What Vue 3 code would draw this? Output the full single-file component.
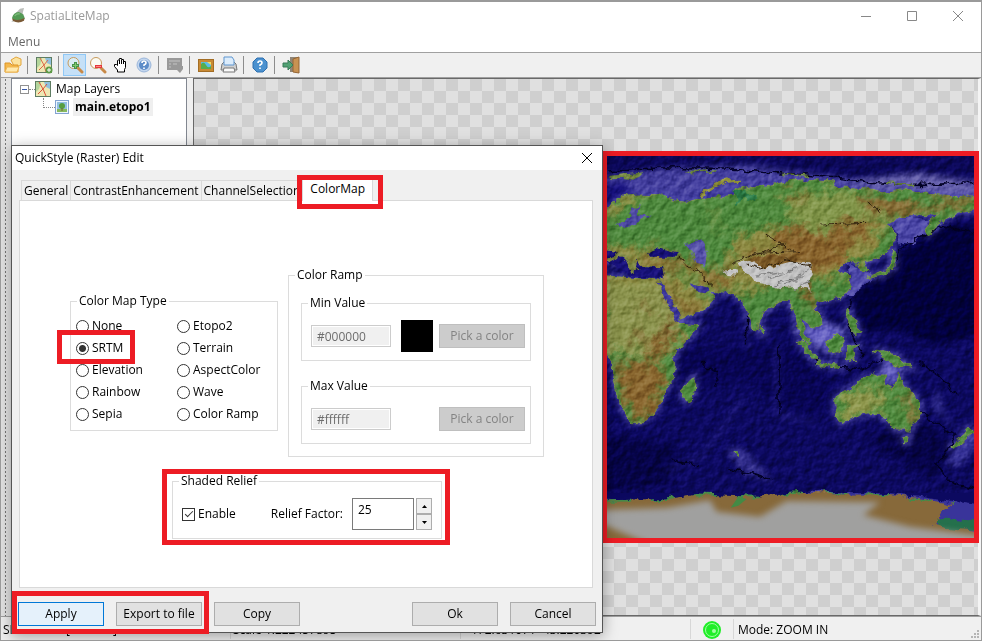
<template>
    <div class="app-window">
        <header class="title-bar">
            <svg class="app-logo" viewBox="0 0 48 48">
                <path d="M4 42 L16 28 L18 14 L30 2 L42 0 L38 16 L44 30 L12 40 Z" fill="#b9bcb8" />
                <path d="M6 30 Q10 14 26 12 Q42 16 44 32 Q30 44 12 38 Z" fill="#549a55" />
                <path d="M6 31 Q20 42 44 30 L42 38 Q26 48 9 39 Z" fill="#7a5a36" />
                <path d="M14 24 Q20 15 29 18" stroke="#7cba79" stroke-width="4" fill="none" />
            </svg>
            <h1>SpatiaLiteMap</h1>
            <div class="window-controls">
                <button aria-label="Minimize"><svg viewBox="0 0 12 12"><path d="M1 6.5H11" /></svg></button>
                <button aria-label="Maximize"><svg viewBox="0 0 12 12"><path d="M1.5 1.5H10.5V10.5H1.5Z" /></svg></button>
                <button aria-label="Close"><svg viewBox="0 0 12 12"><path d="M1 1L11 11M11 1L1 11" /></svg></button>
            </div>
        </header>
        <nav class="menu-bar"><a href="#">Menu</a></nav>

        <div class="toolbar">
            <button aria-label="Open">
                <svg viewBox="0 0 18 18">
                    <path d="M7 4L12 1L17 3V9L11 12Z" fill="#fbe3a0" stroke="#e3a63c" />
                    <path d="M1 7H6L8 9H14V16H1Z" fill="#f5b84c" stroke="#dd9526" />
                    <path d="M3 11H15L13 16H1Z" fill="#ffe9ae" stroke="#eeb650" />
                </svg>
            </button>
            <span class="separator"></span>
            <button aria-label="Add layer">
                <svg viewBox="0 0 18 18">
                    <rect x="1.5" y="1.5" width="15" height="15" fill="#eee8b4" stroke="#5f7d63" />
                    <path d="M2 2H7L5 9L2 12Z" fill="#b5d69c" /><path d="M10 2H16V9L12 7Z" fill="#8fc0dd" />
                    <path d="M5 2L9 9L11 16M9 9L4 14M9 9L13 4" stroke="#dc6848" fill="none" />
                    <circle cx="14" cy="14" r="3.5" fill="#5d9b45" /><path d="M12 14H16M14 12V16" stroke="#fff" />
                </svg>
            </button>
            <span class="separator"></span>
            <button class="active" aria-label="Zoom in">
                <svg viewBox="0 0 18 18">
                    <path d="M12 12L16 16" stroke="#c88a48" stroke-width="3" stroke-linecap="round" />
                    <circle cx="7.5" cy="7" r="5.5" fill="#d9edf5" stroke="#c79a5c" />
                    <path d="M6 9.5H13M9.5 6V13" stroke="#48934c" stroke-width="3" /><path d="M7 9.5H12M9.5 7V12" stroke="#80ca70" />
                </svg>
            </button>
            <button aria-label="Zoom out">
                <svg viewBox="0 0 18 18">
                    <path d="M12 12L16 16" stroke="#c88a48" stroke-width="3" stroke-linecap="round" />
                    <circle cx="7" cy="7" r="5.5" fill="#fbfbf2" stroke="#c79a5c" />
                    <path d="M6 10.5H13" stroke="#e4383c" stroke-width="3" /><path d="M7 10.5H12" stroke="#ff8b86" />
                </svg>
            </button>
            <button aria-label="Pan">
                <svg viewBox="0 0 18 18">
                    <path d="M5.5 16V14L2.500 10.500V8.500H4.500L5.500 9.500V4.500L7.500 3.500V2.500H9.500V3.500H11.500V5.500H13.500V11.500L12.500 13.500V16Z" fill="#fff" stroke="#000" />
                    <path d="M7.500 4V8M9.500 4V8M11.500 5V8" stroke="#000" />
                </svg>
            </button>
            <button aria-label="Identify">
                <svg viewBox="0 0 18 18">
                    <circle cx="9" cy="9" r="7" fill="#c3d6ee" stroke="#9ab6da" />
                    <circle cx="9" cy="9" r="5" fill="#5d8cc8" />
                    <path d="M7 7Q7 5 9 5Q11 5 11 7Q11 8 9 9V10M9 11.500V13" stroke="#fff" stroke-width="1.6" fill="none" />
                </svg>
            </button>
            <span class="separator"></span>
            <button aria-label="Attributes" disabled>
                <svg viewBox="0 0 18 18">
                    <path d="M1 2H16V10H17V13L14 17L11 14H1Z" fill="#999" />
                    <path d="M3 5H14M3 8H5M3 11H5M7 8H11" stroke="#c4c4c4" />
                </svg>
            </button>
            <span class="separator"></span>
            <button aria-label="Map image">
                <svg viewBox="0 0 18 18">
                    <rect x="1.5" y="3.5" width="15" height="12" fill="#c88a35" stroke="#a36d24" />
                    <rect x="4" y="6" width="10" height="7" fill="#58bee5" />
                    <path d="M4 8Q7 5 9 9T14 10V13H4Z" fill="#55ad4c" /><path d="M10 6H14V9Z" fill="#f0dc65" />
                </svg>
            </button>
            <button aria-label="Print">
                <svg viewBox="0 0 18 18">
                    <path d="M2 8L4 6H14L16 8L17 14H1Z" fill="#d0d0d0" stroke="#777" />
                    <path d="M5 1H12L14 4V9H4V1Z" fill="#dcecfb" stroke="#5f96d0" />
                    <path d="M4 12H14L15 16H3Z" fill="#fafafa" stroke="#777" />
                </svg>
            </button>
            <span class="separator"></span>
            <button aria-label="Help">
                <svg viewBox="0 0 18 18">
                    <path d="M6 2H12L16 6V12L12 16H6L2 12V6Z" fill="#4b91cf" stroke="#2e70b0" />
                    <path d="M7 7Q7 5 9 5Q11 5 11 7Q11 8 9 9V10M9 11.500V13" stroke="#fff" stroke-width="1.6" fill="none" />
                </svg>
            </button>
            <span class="separator"></span>
            <button aria-label="Exit">
                <svg viewBox="0 0 18 18">
                    <rect x="8" y="1" width="8" height="15" fill="#8f8577" />
                    <path d="M11 3L17 1V17L11 16Z" fill="#c89252" stroke="#946534" />
                    <path d="M1 7H6V4L11 9L6 14V11H1Z" fill="#52a274" stroke="#397b58" />
                </svg>
            </button>
        </div>

        <main class="workspace">
            <div class="grip"></div>
            <aside class="layer-tree">
                <div class="tree-root">
                    <button class="collapse" aria-label="Collapse">
                        <svg viewBox="0 0 9 9"><rect x=".5" y=".5" width="8" height="8" fill="#fff" stroke="#919191" /><path d="M2 4.5H7" stroke="#3858a8" /></svg>
                    </button>
                    <span class="dots"></span>
                    <svg class="root-icon" viewBox="0 0 16 16">
                        <rect x=".5" y=".5" width="15" height="15" fill="#eee8b4" stroke="#5f7d63" />
                        <path d="M1 1H6L4 8L1 11Z" fill="#b5d69c" /><path d="M9 1H15V8L11 6Z" fill="#8fc0dd" />
                        <path d="M4 1L8 8L11 15M8 8L3 13M8 8L12 3" stroke="#dc5038" fill="none" />
                    </svg>
                    <span>Map Layers</span>
                </div>
                <div class="tree-leaf">
                    <span class="elbow"></span>
                    <svg class="leaf-icon" viewBox="0 0 14 14">
                        <rect x=".5" y=".5" width="13" height="13" fill="#edf5ff" stroke="#84a4d2" />
                        <rect x="2" y="2" width="10" height="10" fill="#91bfe0" /><path d="M2 9H12V12H2Z" fill="#87b95e" />
                        <circle cx="7" cy="6" r="3" fill="#579e40" /><path d="M7 8V11" stroke="#7a6238" />
                    </svg>
                    <strong>main.etopo1</strong>
                </div>
            </aside>

            <section class="map-canvas">
                <svg class="world-map" viewBox="21 33 1101 1146" preserveAspectRatio="none" color-interpolation-filters="sRGB">
                    <defs>
                        <filter id="rough" x="-5%" y="-5%" width="110%" height="110%">
                            <feTurbulence type="fractalNoise" baseFrequency="0.035" numOctaves="4" seed="4" />
                            <feDisplacementMap in="SourceGraphic" scale="26" xChannelSelector="R" yChannelSelector="G" />
                        </filter>
                        <filter id="soft" x="-20%" y="-20%" width="140%" height="140%"><feGaussianBlur stdDeviation="9" /></filter>
                        <filter id="patchy" x="-20%" y="-20%" width="140%" height="140%">
                            <feGaussianBlur stdDeviation="12" result="b" />
                            <feTurbulence type="fractalNoise" baseFrequency="0.03" numOctaves="4" seed="9" result="n" />
                            <feDisplacementMap in="b" in2="n" scale="80" xChannelSelector="R" yChannelSelector="G" />
                        </filter>
                        <filter id="relief" x="0" y="0" width="100%" height="100%">
                            <feTurbulence type="fractalNoise" baseFrequency="0.04" numOctaves="4" seed="7" />
                            <feColorMatrix values="0 0 0 0 0  0 0 0 0 0  0 0 0 0 0  1 0 0 0 0" />
                            <feDiffuseLighting surfaceScale="6" lighting-color="#fff"><feDistantLight azimuth="225" elevation="29" /></feDiffuseLighting>
                        </filter>
                        <clipPath id="land-clip"><path :d="eurasia" /><path :d="africa" /><path :d="australia" /></clipPath>
                    </defs>
                    <rect x="21" y="33" width="1101" height="1146" fill="#0c0960" />
                    <g filter="url(#soft)">
                        <path d="M890 330L1050 235L1150 250V560L1010 600L880 550L790 560L760 460Z" fill="#02013c" />
                        <path d="M230 620L560 600L700 720L650 820L540 780L430 700L220 740Z" fill="#080555" />
                        <path d="M0 870L240 900L210 1020L0 1040ZM930 800L1060 900L1000 1000L800 890Z" fill="#060448" />
                        <path d="M0 95L200 70L440 60L600 82L780 104L950 85L1150 115V200L0 210Z" fill="#4540a0" />
                        <path d="M700 130L780 104L950 85L1150 115V200L720 160Z" fill="#6661ad" />
                        <path d="M0 0H1150V95L950 75L780 93L610 75L430 50L190 62L0 80Z" fill="#0b0858" />
                        <path d="M0 120L70 110L110 145L0 200Z" fill="#15107c" />
                        <path d="M570 545L680 530L740 560L700 630L640 600ZM850 640L910 660L890 725L840 700Z" fill="#706bca" />
                        <path d="M1010 730L1040 830L1150 880L1080 960L1040 960L1090 860L1000 790Z" fill="#38349a" />
                        <path d="M380 910L440 920L520 1010L430 985Z" fill="#312d8c" />
                        <path d="M200 980L310 930L430 760M530 600V810L640 830M430 470L445 620" stroke="#1b1776" stroke-width="12" fill="none" />
                    </g>
                    <g class="shelf" filter="url(#soft)">
                        <path :d="eurasia" /><path :d="africa" /><path :d="australia" />
                        <path v-for="(d, i) in islands" :key="i" :d="d" />
                    </g>
                    <path d="M740 352L800 385L820 395L760 450L725 450L750 400ZM855 240L900 215L985 225L975 265L940 300L900 290L885 255Z" fill="#4f4aaa" filter="url(#rough)" />
                    <g filter="url(#rough)" fill="none" stroke="#020126" stroke-width="5">
                        <path d="M21 78Q220 60 430 75T780 108T1122 112M755 455L745 540L790 640M890 350L900 310L1030 240L1122 268" />
                        <path d="M600 590L650 655L780 675L850 640M960 650L1040 710L1065 755M930 760L990 830L1070 870L1010 960L1050 1010L1122 1030" />
                        <path d="M537 600V810M440 500V600M300 650L350 680L350 725M220 945L300 960M390 975L450 985L515 1005" />
                    </g>
                    <g filter="url(#rough)">
                        <g class="land">
                            <path :d="eurasia" /><path :d="africa" /><path :d="australia" />
                            <path v-for="(d, i) in islands" :key="i" :d="d" />
                        </g>
                        <g clip-path="url(#land-clip)">
                            <g filter="url(#patchy)">
                                <path d="M540 145L760 135L850 200L860 240L700 240L640 280L560 210Z" fill="#82964a" />
                                <path d="M0 310H170L200 360L390 370L400 270L520 240L640 280L860 240L820 330L740 350L730 400L640 400L440 440L330 430L345 500L230 540L180 420L0 410Z" fill="#8d8a42" />
                                <path d="M505 275L560 245L670 265L720 230L840 235L760 290L730 350L640 380L450 365L430 335L570 325Z" fill="#8a652d" />
                                <path d="M780 140L890 165L1000 190L940 215L850 210L785 185ZM1000 170L1122 150V180L960 205Z" fill="#8a6c35" />
                                <path d="M140 340L250 335L330 385L400 380L390 430L320 410L270 370L150 365ZM190 385L240 470L320 490L260 510L215 470Z" fill="#876a30" />
                                <path d="M195 365L240 370L290 420L340 450L330 470L290 440L240 400Z" fill="#5c8f42" />
                                <path d="M0 190L90 148L130 150L70 185L0 220ZM340 175L352 270" fill="#958a43" stroke="#9a994c" stroke-width="8" />
                                <path d="M590 425L640 420L660 500L620 470ZM550 155L610 145L590 175Z" fill="#87602b" />
                                <path d="M0 410L180 420L260 540L230 600L180 640L0 620Z" fill="#8c944e" />
                                <path d="M45 660L170 640L215 590L210 560L150 590L130 640L210 690L180 760L140 830L70 790Z" fill="#8a672f" />
                                <path d="M110 480L150 465L140 500ZM90 560L160 580L110 590ZM200 520H230V570L180 590Z" fill="#80602d" />
                                <path d="M720 760L800 730L870 740L830 800L720 830Z" fill="#8f974d" />
                                <path d="M935 730L960 800L930 850L900 760Z" fill="#847a3d" />
                            </g>
                        </g>
                        <path d="M448 342L510 330L560 330L620 345L560 350L490 372L465 365Z" fill="#7f5d28" />
                        <path d="M413 350L450 348L490 372L570 350L625 355L640 380L625 420L635 440L600 425L540 430L480 415L435 385ZM370 380L410 372L405 392L380 390Z" fill="#c4c4c4" />
                        <path d="M400 350L470 325L600 320M455 335L555 300M500 270L580 320M440 360L480 372L560 345L635 365M660 240L800 235M800 170L840 200M230 340L290 380L340 425" stroke="#33240f" stroke-width="3" fill="none" />
                        <path d="M470 390L550 380M510 400L590 370M520 420L610 395M560 420L625 375M580 430L630 410" stroke="#8b8b8b" stroke-width="4" fill="none" />
                        <g class="water">
                            <path d="M0 315L60 320L100 365L110 345L140 370L190 370L195 400L100 395L0 350ZM145 325L170 310L230 325L225 335L150 335Z" fill="#17117a" />
                            <path d="M255 295L305 283L320 325L315 365L290 360L280 325Z" fill="#5b56ad" />
                            <path d="M275 415L330 430L320 445L290 440ZM170 415L190 425L245 520L230 525Z" fill="#3f399e" />
                            <path d="M95 190L125 180L105 215L150 215L75 250L40 245L80 225Z" fill="#504ba5" />
                            <path d="M400 135L410 180L425 155L440 175L470 160L450 145L425 135Z" fill="#2f7f4a" />
                        </g>
                        <path d="M21 350L60 325L85 350L100 385M95 345L110 375" stroke="#7f8843" stroke-width="12" fill="none" />
                        <path d="M300 155Q330 105 420 106" stroke="#94953f" stroke-width="10" fill="none" />
                        <path d="M30 95L130 85L100 105ZM260 80L350 78M550 85L630 95M860 115L940 118" stroke="#6f8943" stroke-width="5" fill="#828f49" />
                        <path d="M0 1062L160 1075L300 1050L470 1065L620 1040L800 1042L960 1055L1080 1075L1150 1085V1210H0Z" fill="#39349a" />
                        <path d="M0 1068L180 1065L300 1048L380 1052L470 1055L610 1042L700 1048L860 1050L930 1055L1015 1070L1060 1080L1025 1100L1000 1140L1150 1160V1220H0V1068Z" fill="#87693a" />
                        <path d="M1005 1124Q1050 1115 1150 1133V1155Q1040 1155 1005 1140Z" fill="#24704c" />
                        <path d="M21 1068L180 1065L300 1048L470 1055L610 1042L860 1050L1060 1080" stroke="#458b48" stroke-width="5" stroke-dasharray="70 60" fill="none" />
                    </g>
                    <g filter="url(#soft)" fill="#a0a09f">
                        <path d="M0 1095L200 1088L330 1065L350 1100L480 1115L560 1068L840 1072L790 1110L930 1145L1150 1172V1220H200L0 1135Z" />
                    </g>
                    <path d="M392 1088L415 1055L440 1062L415 1082Z" fill="#438a45" />
                    <rect class="hillshade" x="21" y="33" width="1101" height="1010" filter="url(#relief)" />
                </svg>
            </section>
        </main>

        <footer class="status-bar">
            <span class="cell">SRID: 4326 [WGS 84]</span>
            <span class="cell">Scale 1:222457895</span>
            <span class="cell coordinates">172.631071 -43.220392</span>
            <span class="cell lamp">
                <svg viewBox="0 0 18 18"><circle cx="9" cy="9" r="9" fill="#20ee28" /><circle cx="9" cy="9" r="6.5" fill="none" stroke="#a4ffa4" /><circle cx="11" cy="10" r="2" fill="#a4ffa4" /></svg>
            </span>
            <span class="cell mode">Mode: ZOOM IN</span>
            <svg class="size-grip" viewBox="0 0 8 8"><path d="M6 0h2v2h-2zM3 3h2v2h-2zM6 3h2v2h-2zM0 6h2v2h-2zM3 6h2v2h-2zM6 6h2v2h-2z" fill="#b5b5b5" /></svg>
        </footer>

        <form class="dialog" role="dialog" aria-labelledby="dialog-title" @submit.prevent>
            <div class="dialog-title">
                <h2 id="dialog-title">QuickStyle (Raster) Edit</h2>
                <button type="button" aria-label="Close dialog"><svg viewBox="0 0 12 12"><path d="M1 1L11 11M11 1L1 11" /></svg></button>
            </div>
            <div class="tabs">
                <button v-for="tab in tabs" :key="tab" type="button" :class="{ selected: tab === activeTab }"
                    @click="activeTab = tab">{{ tab }}</button>
            </div>
            <div class="tab-panel">
                <div class="groups">
                    <fieldset class="map-types">
                        <legend>Color Map Type</legend>
                        <div class="type-list">
                            <label v-for="type in mapTypes" :key="type">
                                <input v-model="mapType" type="radio" name="map-type" :value="type" />{{ type }}
                            </label>
                        </div>
                    </fieldset>
                    <fieldset class="color-ramp">
                        <legend>Color Ramp</legend>
                        <div class="ramp-values">
                            <fieldset>
                                <legend>Min Value</legend>
                                <div class="color-value">
                                    <input type="text" value="#000000" aria-label="Min Value" disabled />
                                    <span class="swatch black"></span>
                                    <button type="button" class="push" disabled>Pick a color</button>
                                </div>
                            </fieldset>
                            <fieldset>
                                <legend>Max Value</legend>
                                <div class="color-value">
                                    <input type="text" value="#ffffff" aria-label="Max Value" disabled />
                                    <span class="swatch"></span>
                                    <button type="button" class="push" disabled>Pick a color</button>
                                </div>
                            </fieldset>
                        </div>
                    </fieldset>
                </div>
                <fieldset class="shaded-relief">
                    <legend>Shaded Relief</legend>
                    <div class="relief-row">
                        <label class="enable"><input v-model="shaded" type="checkbox" />Enable</label>
                        <label class="factor-label" for="factor">Relief Factor:</label>
                        <input id="factor" v-model.number="factor" class="factor" type="text" />
                        <span class="spinner">
                            <button type="button" aria-label="Increase" @click="factor++"><svg viewBox="0 0 5 3"><path d="M0 3L2.5 0L5 3Z" /></svg></button>
                            <button type="button" aria-label="Decrease" @click="factor--"><svg viewBox="0 0 5 3"><path d="M0 0L2.5 3L5 0Z" /></svg></button>
                        </span>
                    </div>
                </fieldset>
            </div>
            <div class="actions">
                <button type="button" class="push default">Apply</button>
                <button type="button" class="push">Export to file</button>
                <button type="button" class="push">Copy</button>
                <button type="button" class="push ok">Ok</button>
                <button type="button" class="push">Cancel</button>
            </div>
            <span class="highlight on-tab"></span>
            <span class="highlight on-type"></span>
            <span class="highlight on-relief"></span>
            <span class="highlight on-actions"></span>
        </form>
    </div>
</template>

<script setup>
import { ref } from 'vue';

const tabs = ['General', 'ContrastEnhancement', 'ChannelSelection', 'ColorMap'];
const activeTab = ref('ColorMap');

// filled column by column
const mapTypes = ['None', 'SRTM', 'Elevation', 'Rainbow', 'Sepia', 'Etopo2', 'Terrain', 'AspectColor', 'Wave', 'Color Ramp'];
const mapType = ref('SRTM');

const shaded = ref(true);
const factor = ref(25);

const eurasia = 'M0 205L50 170L80 150L120 147L180 150L225 168L260 172L300 160L370 155L400 150L410 130L440 135L480 125L520 118L600 105L690 110L720 125L800 132L850 145L900 135L960 140L1010 152L1050 155L1140 152V192L1070 205L1030 225L1000 255L982 270L975 260L990 225L1020 205L960 210L900 215L855 240L880 258L885 290L860 320L820 345L792 350L803 378L782 380L770 350L735 350L715 375L745 390L755 420L730 450L690 465L650 475L640 490L665 515L665 540L640 550L620 535L605 520L610 560L635 595L625 600L600 570L590 530L575 490L570 465L540 470L500 495L485 520L470 555L455 545L440 500L430 470L400 445L330 435L345 460L320 490L245 520L225 500L190 440L185 405L190 370L0 350Z';
const africa = 'M0 390L100 400L180 405L185 440L215 490L245 535L300 540L270 575L225 625L220 700L190 745L175 790L130 830L90 830L65 790L40 710L45 660L0 600Z';
const australia = 'M705 755L750 730L790 700L815 690L860 690L850 715L880 735L895 685L910 720L960 770L962 800L930 855L880 850L860 820L820 805L780 810L720 835L705 800Z';
const islands = [
    'M245 740L270 710L285 695L283 740L265 770L245 760Z',
    'M905 875L928 875L925 890L912 892Z',
    'M1105 845L1122 860L1060 910L1050 905L1090 875Z',
    'M875 315L885 330L885 365L850 390L800 400L870 370Z',
    'M595 590L615 595L650 640L640 645L600 600Z',
    'M650 650L720 662L725 668L650 658Z',
    'M675 598L715 565L730 580L720 625L685 620Z',
    'M740 605L785 600L755 615L770 650L755 630L740 650Z',
    'M820 615L860 620L900 640L935 670L880 660L860 640Z',
    'M745 490L755 515L780 560L765 570L740 520Z',
    'M480 540L495 555L490 570L480 560Z',
    'M402 922L420 925L418 932L404 930Z',
];
</script>

<style>
body {
    margin: 0;
}
</style>

<style scoped>
.app-window {
    position: relative;
    display: flex;
    flex-direction: column;
    min-height: 100vh;
    box-sizing: border-box;
    border: 1px solid #9a9a9a;
    border-top-width: 2px;
    background: #f0f0f0;
    color: #000;
    font: 12px/16px "Open Sans", "Noto Sans", sans-serif;
    overflow: hidden;
}

button,
input {
    font: inherit;
    color: inherit;
    box-sizing: border-box;
    margin: 0;
    padding: 0;
}

h1,
h2 {
    margin: 0;
    font-size: 12px;
    font-weight: normal;
}

svg {
    display: block;
}

.title-bar {
    display: flex;
    align-items: center;
    height: 28px;
    padding-left: 9px;
    background: #fff;
    color: #999;
}

.app-logo {
    width: 16px;
    height: 16px;
    margin-right: 4px;
}

.window-controls {
    display: flex;
    margin-left: auto;
}

.window-controls button {
    width: 46px;
    height: 28px;
    display: grid;
    place-items: center;
    border: none;
    background: none;
}

.window-controls svg,
.dialog-title svg {
    width: 12px;
    height: 12px;
    fill: none;
    stroke: #888;
}

.menu-bar {
    padding: 4px 7px 2px;
    background: #fff;
    border-bottom: 1px solid #a0a0a0;
}

.menu-bar a {
    color: #666;
    text-decoration: none;
}

.toolbar {
    display: flex;
    align-items: center;
    height: 24px;
    border-bottom: 1px solid #a0a0a0;
}

.toolbar button {
    width: 23px;
    height: 22px;
    display: grid;
    place-items: center;
    border: 1px solid transparent;
    background: none;
}

.toolbar button.active {
    background: #c5e0f7;
    border-color: #90c8f6;
}

.toolbar svg {
    width: 18px;
    height: 18px;
}

.separator {
    width: 8px;
    height: 18px;
    background: linear-gradient(#8d8d8d, #8d8d8d) 3px 0 / 1px 100% no-repeat;
}

.workspace {
    flex: 1;
    display: flex;
    min-height: 536px;
    border-bottom: 1px solid #a0a0a0;
}

.grip {
    width: 10px;
    background: radial-gradient(circle, #777 1px, transparent 1px) 3px 4px / 3px 4px repeat-y, #e4e4e4;
}

.layer-tree {
    width: 174px;
    padding-top: 1px;
    background: #fff;
    border: 1px solid #828790;
}

.tree-root,
.tree-leaf {
    display: flex;
    align-items: center;
    height: 18px;
}

.tree-root {
    padding-left: 8px;
}

.collapse {
    width: 9px;
    height: 9px;
    border: none;
    background: none;
}

.collapse svg {
    width: 9px;
    height: 9px;
}

.dots {
    width: 6px;
    border-top: 1px dotted #888;
}

.root-icon {
    width: 16px;
    height: 16px;
    margin-right: 5px;
}

.tree-leaf {
    padding-left: 31px;
}

.elbow {
    width: 11px;
    height: 9px;
    align-self: flex-start;
    border-left: 1px dotted #888;
    border-bottom: 1px dotted #888;
}

.leaf-icon {
    width: 14px;
    height: 14px;
    margin-right: 4px;
}

.tree-leaf strong {
    padding: 1px 2px;
    background: #efefef;
}

.map-canvas {
    position: relative;
    flex: 1;
    margin-left: 6px;
    border: 1px solid #696969;
    border-right: 3px solid #f4f4f4;
    background: conic-gradient(#cfcfcf 25%, #e0e0e0 0 50%, #cfcfcf 0 75%, #e0e0e0 0) 0 0 / 24px 24px;
}

.world-map {
    position: absolute;
    top: 72px;
    right: -1px;
    width: 367px;
    height: 382px;
    border: 5px solid #ed1c24;
}

.shelf {
    fill: #4843a8;
    stroke: #4843a8;
    stroke-width: 14px;
}

.land {
    fill: #4f8a3e;
    stroke: #738f44;
    stroke-width: 3px;
}

.hillshade {
    mix-blend-mode: soft-light;
    opacity: 0.6;
}

.status-bar {
    display: flex;
    align-items: center;
    height: 23px;
    padding-right: 2px;
}

.cell {
    flex: 0 0 230px;
    box-sizing: border-box;
    padding: 3px 4px 1px 2px;
    border-right: 1px solid #d7d7d7;
}

.coordinates {
    padding-left: 10px;
}

.lamp {
    flex-basis: 42px;
    padding: 2px 12px 0;
}

.lamp svg {
    width: 18px;
    height: 18px;
}

.mode {
    flex: 1;
    padding-left: 4px;
    border: none;
}

.size-grip {
    width: 8px;
    height: 8px;
    align-self: flex-end;
    margin-bottom: 2px;
}

.dialog {
    position: absolute;
    left: 10px;
    top: 143px;
    width: 590px;
    border: 1px solid #555;
    background: #f0f0f0;
    box-shadow: 0 3px 14px rgba(0, 0, 0, 0.35);
}

.dialog-title {
    display: flex;
    align-items: center;
    justify-content: space-between;
    height: 24px;
    padding: 0 9px 0 3px;
    background: #fff;
}

.dialog-title button {
    border: none;
    background: none;
}

.dialog-title svg {
    stroke: #000;
}

.tabs {
    display: flex;
    align-items: flex-end;
    height: 23px;
    margin-top: 7px;
    padding-left: 9px;
}

.tabs button {
    height: 20px;
    padding: 0 2px;
    border: 1px solid #d9d9d9;
    border-right: none;
    border-bottom: none;
    background: #f0f0f0;
    white-space: nowrap;
}

.tabs button.selected {
    z-index: 1;
    height: 24px;
    margin-bottom: -1px;
    padding: 0 7px 2px;
    border-right: 1px solid #d9d9d9;
    background: #fff;
}

.tab-panel {
    display: flex;
    flex-direction: column;
    align-items: center;
    margin: 0 9px 0 7px;
    padding: 66px 0 48px 2px;
    border: 1px solid #d9d9d9;
    background: #fff;
}

.groups {
    display: flex;
    align-items: center;
    gap: 10px;
    margin-bottom: 16px;
}

fieldset {
    box-sizing: border-box;
    min-width: 0;
    margin: 0;
    padding: 0;
    border: 1px solid #dcdcdc;
}

legend {
    margin-left: 6px;
    padding: 0 2px;
}

.map-types {
    width: 208px;
}

.type-list {
    display: grid;
    grid-template-rows: repeat(5, 22px);
    grid-auto-flow: column;
    grid-auto-columns: 101px;
    padding: 6px 5px 5px;
}

.type-list label {
    display: flex;
    align-items: center;
    gap: 3px;
    white-space: nowrap;
}

.type-list input {
    width: 13px;
    height: 13px;
    appearance: none;
    border: 1px solid #333;
    border-radius: 50%;
    background: #fff;
}

.type-list input:checked {
    background: radial-gradient(circle, #333 3px, #fff 4px);
}

.color-ramp {
    width: 256px;
}

.ramp-values {
    display: grid;
    gap: 17px;
    padding: 12px;
}

.color-value {
    display: flex;
    align-items: center;
    padding: 9px 5px 8px 9px;
}

.color-value input {
    width: 80px;
    height: 22px;
    padding: 0 5px;
    border: 1px solid #ccc;
    background: #f0f0f0;
    box-shadow: inset 0 0 0 1px #fff;
    color: #6d6d6d;
}

.swatch {
    width: 32px;
    height: 32px;
    margin: 0 6px 0 10px;
}

.black {
    background: #000;
}

.push {
    width: 86px;
    height: 24px;
    border: 1px solid #adadad;
    background: #e1e1e1;
    white-space: nowrap;
}

.push:disabled {
    background: #ccc;
    border-color: #bfbfbf;
    color: #838383;
}

.push.default {
    background: #e5f1fb;
    border-color: #0078d7;
}

.shaded-relief {
    width: 270px;
}

.relief-row {
    display: flex;
    align-items: center;
    padding: 9px 9px 8px;
}

.enable {
    display: flex;
    align-items: center;
    gap: 3px;
    flex: 1;
}

.enable input {
    display: grid;
    place-items: center;
    width: 13px;
    height: 13px;
    appearance: none;
    border: 1px solid #333;
    background: #fff;
}

.enable input:checked::before {
    content: "";
    width: 3px;
    height: 7px;
    margin-bottom: 2px;
    border: solid #333;
    border-width: 0 1px 1px 0;
    rotate: 45deg;
}

.factor-label {
    margin-right: 9px;
}

.factor {
    width: 62px;
    height: 32px;
    padding: 0 5px 10px;
    border: 1px solid #7a7a7a;
    background: #fff;
}

.spinner {
    display: grid;
    width: 16px;
    height: 32px;
    margin-left: 2px;
}

.spinner button {
    display: grid;
    place-items: center;
    border: 1px solid #adadad;
    background: #f0f0f0;
}

.spinner svg {
    width: 5px;
    height: 3px;
}

.actions {
    display: flex;
    gap: 12px;
    padding: 14px 6px 6px;
}

.ok {
    margin-left: auto;
}

.highlight {
    position: absolute;
    z-index: 2;
    box-sizing: border-box;
    border: 5px solid #ed1c24;
    pointer-events: none;
}

.on-tab {
    left: 285px;
    top: 29px;
    width: 86px;
    height: 34px;
}

.on-type {
    left: 45px;
    top: 184px;
    width: 78px;
    height: 34px;
}

.on-relief {
    left: 150px;
    top: 323px;
    width: 288px;
    height: 76px;
}

.on-actions {
    left: 0;
    top: 445px;
    width: 197px;
    height: 43px;
}
</style>
